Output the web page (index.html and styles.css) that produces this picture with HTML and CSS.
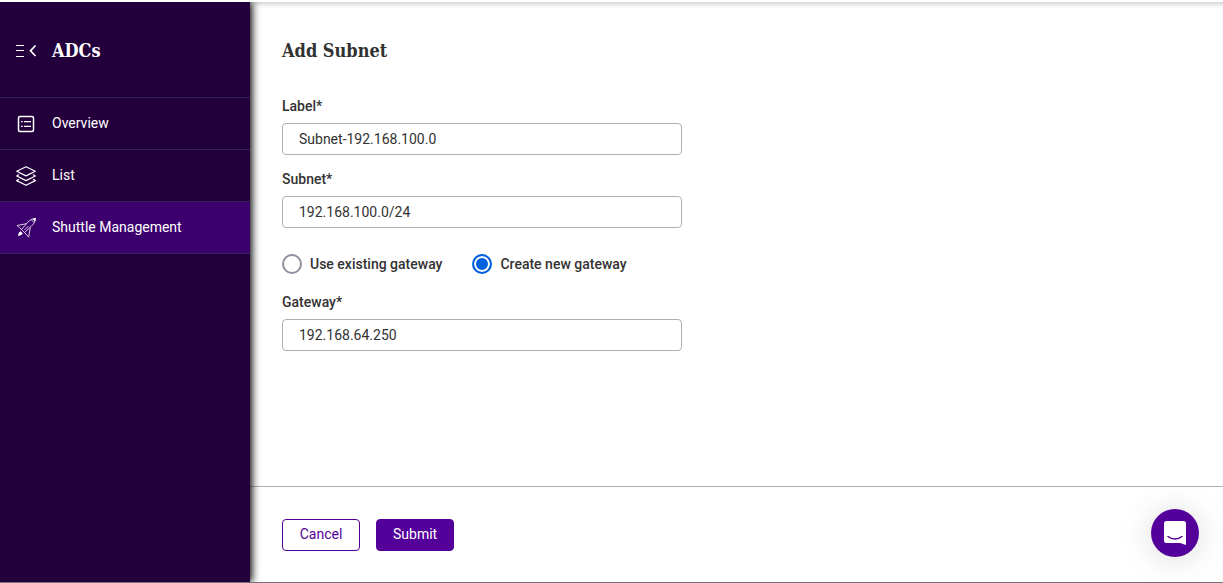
FILE: index.html
```html
<!DOCTYPE html>
<html lang="en">
<head>
    <meta charset="UTF-8">
    <meta name="viewport" content="width=device-width, initial-scale=1.0">
    <title>Add Subnet</title>
    <link rel="stylesheet" href="styles.css">
</head>
<body>
    <div class="page">
        <aside class="sidebar">
            <div class="sidebar-header">
                <button type="button" class="collapse" aria-label="Collapse menu">
                    <svg width="22" height="14" viewBox="0 0 22 14" fill="none" stroke="#fff">
                        <path d="M0 1.500h8M0 6.500h8M0 12.500h8" stroke-width="1.200"/>
                        <path d="M19.500 1.500l-5 5.300 5 5.200" stroke-width="1.700"/>
                    </svg>
                </button>
                <h2 class="title">ADCs</h2>
            </div>
            <nav class="menu">
                <a href="#" class="menu-item">
                    <svg width="20" height="20" viewBox="0 0 20 20" fill="none" stroke="#fff" stroke-width="1.5">
                        <rect x="2.500" y="2.500" width="15" height="15" rx="1.500"/>
                        <path d="M5 7.600h1.700M8 7.600h7M5 12.400h1.700M8 12.400h7" stroke-width="1.400"/>
                    </svg>
                    <span>Overview</span>
                </a>
                <a href="#" class="menu-item">
                    <svg width="20" height="20" viewBox="0 0 20 20" fill="none" stroke="#fff" stroke-width="1.200" stroke-linejoin="round">
                        <path d="M10 .7l9.300 4.600-9.300 4.600L.7 5.300z"/>
                        <path d="M3 8.600L.7 10l9.300 4.600 9.300-4.600L17 8.600"/>
                        <path d="M3 13.200L.7 14.600l9.300 4.700 9.300-4.700-2.300-1.400"/>
                    </svg>
                    <span>List</span>
                </a>
                <a href="#" class="menu-item active">
                    <svg width="20" height="20" viewBox="0 0 20 20" fill="none" stroke="#fff" stroke-width=".8" stroke-linejoin="round">
                        <path d="M19.500.5c-3.500.2-5.500 1.300-8 4L5.500 11.500l3 3 6.500-6c2.800-2.500 4-4.500 4.500-8z"/>
                        <path d="M10.500 5.700L1.200 7.500l4.300 4M14.300 9.500l-1.600 9.600-4.200-4.600M15.500 2l2.500 2.500M8.500 12l4-4"/>
                        <path d="M17 1l2.500-.5L19 3zM4.500 13.500l2 2-1.500 1.200-2.500.8.600-2.500z" fill="#fff"/>
                    </svg>
                    <span>Shuttle Management</span>
                </a>
            </nav>
        </aside>

        <form class="main">
            <div class="content">
                <h1 class="title">Add Subnet</h1>

                <div class="field">
                    <label for="label">Label*</label>
                    <input type="text" id="label" value="Subnet-192.168.100.0">
                </div>
                <div class="field">
                    <label for="subnet">Subnet*</label>
                    <input type="text" id="subnet" value="192.168.100.0/24">
                </div>

                <div class="options">
                    <label class="option">
                        <input type="radio" name="gateway-type" value="existing">
                        Use existing gateway
                    </label>
                    <label class="option">
                        <input type="radio" name="gateway-type" value="new" checked>
                        Create new gateway
                    </label>
                </div>

                <div class="field">
                    <label for="gateway">Gateway*</label>
                    <input type="text" id="gateway" value="192.168.64.250">
                </div>
            </div>

            <div class="actions">
                <button type="button" class="btn">Cancel</button>
                <button type="submit" class="btn btn-primary">Submit</button>
            </div>
        </form>
    </div>

    <button type="button" class="chat" aria-label="Open chat">
        <svg width="22" height="24" viewBox="0 0 22 24">
            <path d="M2.500 0h17A2.500 2.500 0 0 1 22 2.500V24l-6-2H2.500A2.500 2.500 0 0 1 0 19.500v-17A2.500 2.500 0 0 1 2.500 0z" fill="#fff"/>
            <path d="M4 15.500c4.200 3.300 9.800 3.300 14 0" fill="none" stroke="#54009b" stroke-width="1.500" stroke-linecap="round"/>
        </svg>
    </button>
</body>
</html>
```

FILE: styles.css
```css
* {
    box-sizing: border-box;
}

body {
    margin: 0;
    font-family: Roboto, "Liberation Sans", sans-serif;
    font-size: 14px;
    line-height: 20px;
    color: #323232;
    background: #fff;
}

.page {
    display: flex;
    min-height: 100vh;
    border-top: 2px solid #fff;
    border-bottom: 1px solid #747474;
}

.title {
    margin: 0;
    font-family: "Roboto Slab", "DejaVu Serif Condensed", "DejaVu Serif", serif;
    font-size: 18px;
    font-weight: 600;
    line-height: 34px;
}

/* sidebar */
.sidebar {
    position: relative;
    flex: 0 0 250px;
    background: #23003c;
    color: #fff;
    box-shadow: 2px 0 8px #000;
    clip-path: inset(0 -12px 0 0);
}

.sidebar-header {
    display: flex;
    align-items: center;
    gap: 14px;
    height: 96px;
    padding: 2px 16px 0;
    border-bottom: 1px solid #36205a;
}

.collapse {
    display: flex;
    padding: 0;
    border: none;
    background: none;
    cursor: pointer;
}

.menu-item {
    display: flex;
    align-items: center;
    gap: 16px;
    height: 52px;
    padding: 0 16px;
    border-bottom: 1px solid #36205a;
    color: #fff;
    text-decoration: none;
}

.menu-item span {
    padding-bottom: 2px;
}

.menu-item.active {
    background: #3c006e;
}

/* form */
.main {
    flex: 1;
    display: flex;
    flex-direction: column;
    min-width: 0;
    box-shadow: inset 0 5px 5px -3px #ccc;
}

.content {
    flex: 1;
    padding: 32px;
}

.content .title {
    margin-bottom: 28px;
}

.field {
    display: flex;
    flex-direction: column;
    gap: 7px;
    max-width: 400px;
    margin-bottom: 14px;
}

.field label,
.option {
    font-weight: 500;
}

.field input {
    height: 32px;
    padding: 0 16px;
    border: 1px solid #afafaf;
    border-radius: 4px;
    font: inherit;
    color: inherit;
    background: #fff;
}

.options {
    display: flex;
    gap: 30px;
    padding: 12px 0 18px;
}

.option {
    display: flex;
    align-items: center;
    gap: 8px;
}

.option input {
    appearance: none;
    width: 20px;
    height: 20px;
    margin: 0;
    border: 2px solid #8f8f9d;
    border-radius: 50%;
}

.option input:checked {
    border-color: #0060df;
    background: #0060df;
    box-shadow: inset 0 0 0 2px #fff;
}

.actions {
    display: flex;
    gap: 16px;
    height: 96px;
    padding: 32px;
    border-top: 1px solid #afafaf;
}

.btn {
    min-width: 78px;
    height: 32px;
    padding: 0 16px 2px;
    border: 1px solid #54009b;
    border-radius: 4px;
    background: #fff;
    color: #54009b;
    font: inherit;
    cursor: pointer;
}

.btn-primary {
    background: #54009b;
    color: #fff;
}

.chat {
    position: fixed;
    right: 24px;
    bottom: 26px;
    display: flex;
    align-items: center;
    justify-content: center;
    width: 48px;
    height: 48px;
    padding: 0;
    border: none;
    border-radius: 50%;
    background: #54009b;
    box-shadow: 0 2px 32px rgba(0, 0, 0, 0.15);
    cursor: pointer;
}
```
